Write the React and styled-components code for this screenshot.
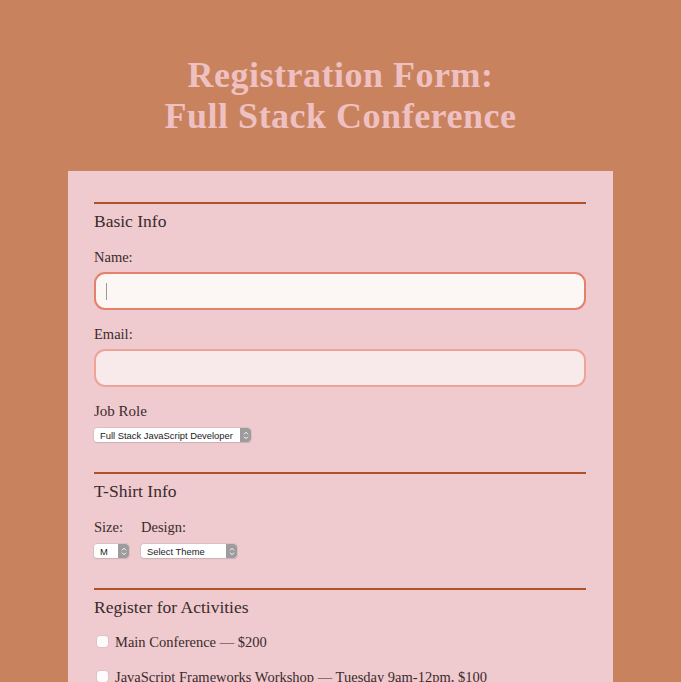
import React from "react";
import styled, { createGlobalStyle } from "styled-components";

const Global = createGlobalStyle`
  html, body { margin: 0; padding: 0; }
  body {
    background: #c8835e;
    font-family: "Liberation Serif", "DejaVu Serif", serif;
    color: #3b2a2b;
  }
`;

const Page = styled.div`
  min-height: 682px;
  display: flex;
  flex-direction: column;
  align-items: center;
`;

const Title = styled.h1`
  margin: 0;
  padding-top: 55px;
  font-size: 36px;
  line-height: 41px;
  font-weight: 700;
  text-align: center;
  color: #efc0c1;
  letter-spacing: 0.5px;
`;

const Card = styled.form`
  box-sizing: border-box;
  width: 545px;
  margin-top: 34px;
  padding: 31px 27px 40px 26px;
  background: #efcacf;
  display: flex;
  flex-direction: column;
  gap: 30px;
`;

const Section = styled.section`
  border-top: 2px solid #ae5329;
  padding-top: 6px;
  display: flex;
  flex-direction: column;
`;

const SectionTitle = styled.h2`
  margin: 0 0 16px;
  font-size: 17.5px;
  line-height: 22px;
  font-weight: 400;
  color: #3a2a2b;
`;

const Label = styled.label`
  display: block;
  font-size: ${(p) => p.$size || 14.5}px;
  line-height: 18px;
  margin-bottom: ${(p) => p.$gap || 6}px;
`;

const InputWrap = styled.div`
  position: relative;
  margin-bottom: 15px;
`;

const Input = styled.input`
  box-sizing: border-box;
  width: 100%;
  height: 38px;
  border-radius: 11px;
  border: 2px solid ${(p) => (p.$focused ? "#e3816d" : "#eca496")};
  background: ${(p) => (p.$focused ? "#fcf7f5" : "#f8e9ea")};
  outline: none;
  padding: 0 10px;
  font-size: 14px;
  font-family: inherit;
`;

const Caret = styled.span`
  position: absolute;
  left: 12px;
  top: 11px;
  width: 1px;
  height: 17px;
  background: #9a9a9a;
`;

const SelectBox = styled.div`
  position: relative;
  width: ${(p) => p.$w}px;
  height: 14px;
  box-sizing: border-box;
  border-radius: 3px;
  background: #ffffff;
  box-shadow: 0 0 0 0.5px #c9b8ba, 0 0.5px 1px rgba(0,0,0,0.15);
  display: flex;
  align-items: center;
  font-family: "Liberation Sans", Arial, sans-serif;
  font-size: 9.4px;
  color: #1b1b1b;
  overflow: hidden;
`;

const SelectText = styled.span`
  flex: 1;
  padding-left: 6px;
  white-space: nowrap;
`;

const Arrows = styled.span`
  width: 11px;
  height: 100%;
  background: #9d9b9c;
  display: flex;
  align-items: center;
  justify-content: center;
  border-radius: 0 3px 3px 0;
`;

const Row = styled.div`
  display: flex;
  gap: 12px;
`;

const Col = styled.div`
  display: flex;
  flex-direction: column;
`;

const Check = styled.label`
  display: flex;
  align-items: center;
  gap: 7px;
  padding-left: 3px;
  font-size: 14.5px;
  line-height: 18px;
  height: 35px;
  margin-top: ${(p) => (p.$first ? -10 : 0)}px;
`;

const Box = styled.span`
  width: 11px;
  height: 11px;
  border-radius: 3px;
  background: #fdfbfb;
  box-shadow: 0 0 0 0.5px #cdb9bb;
  flex: none;
`;

const ArrowIcon = () => (
  <svg width="6" height="9" viewBox="0 0 6 9">
    <path d="M1 3.3 L3 1.3 L5 3.3 M1 5.7 L3 7.7 L5 5.7" fill="none" stroke="#fff" strokeWidth="1" />
  </svg>
);

const Select = ({ w, children }) => (
  <SelectBox $w={w}>
    <SelectText>{children}</SelectText>
    <Arrows><ArrowIcon /></Arrows>
  </SelectBox>
);

export default function App() {
  return (
    <Page>
      <Global />
      <Title>
        Registration Form:
        <br />
        Full Stack Conference
      </Title>
      <Card onSubmit={(e) => e.preventDefault()}>
        <Section>
          <SectionTitle>Basic Info</SectionTitle>
          <Label>Name:</Label>
          <InputWrap>
            <Input $focused type="text" />
            <Caret />
          </InputWrap>
          <Label>Email:</Label>
          <InputWrap>
            <Input type="email" />
          </InputWrap>
          <Label $size={15} $gap={8}>Job Role</Label>
          <Select w={157}>Full Stack JavaScript Developer</Select>
        </Section>
        <Section>
          <SectionTitle>T-Shirt Info</SectionTitle>
          <Row>
            <Col>
              <Label $gap={8}>Size:</Label>
              <Select w={35}>M</Select>
            </Col>
            <Col>
              <Label $gap={8}>Design:</Label>
              <Select w={96}>Select Theme</Select>
            </Col>
          </Row>
        </Section>
        <Section>
          <SectionTitle>Register for Activities</SectionTitle>
          <Check $first><Box />Main Conference — $200</Check>
          <Check><Box />JavaScript Frameworks Workshop — Tuesday 9am-12pm, $100</Check>
          <Check><Box />JavaScript Libraries Workshop — Tuesday 1pm-4pm, $100</Check>
        </Section>
      </Card>
    </Page>
  );
}
